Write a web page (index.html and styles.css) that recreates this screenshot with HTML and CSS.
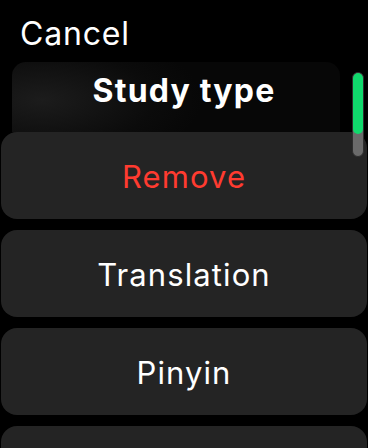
FILE: index.html
```html
<!DOCTYPE html>
<html>
<head>
	<meta charset="utf-8">
	<meta name="viewport" content="width=device-width, initial-scale=1">
	<title>Study type</title>
	<link rel="stylesheet" href="styles.css">
</head>
<body>
	<div class="top-bar">
		<span class="cancel">Cancel</span>
	</div>
	<div class="title-bar">
		<h1 class="title">Study type</h1>
	</div>
	<div class="options">
		<div class="option remove">Remove</div>
		<div class="option">Translation</div>
		<div class="option">Pinyin</div>
		<div class="option"></div>
	</div>
	<div class="scroll-track">
		<div class="scroll-thumb"></div>
	</div>
</body>
</html>
```

FILE: styles.css
```css
* {
	margin: 0px;
	padding: 0px;
	box-sizing: border-box;
}

html, body {
	height: 100%;
	overflow: hidden;
}

body {
	background-color: black;
	color: white;
	font-family: Inter, 'Noto Sans', sans-serif;
}

.top-bar {
	height: 62px;
	padding: 14px 0 0 20px;
}

.cancel {
	font-size: 32px;
	line-height: 40px;
	letter-spacing: 0.8px;
}

.title-bar {
	height: 70px;
	margin: 0 28px 0 12px;
	display: flex;
	justify-content: center;
	align-items: center;
	border-radius: 14px 14px 0 0;
	background: radial-gradient(ellipse 160px 70px at 30px 38px, #1c1c1c, #0b0b0b 70%, #070707);
}

.title {
	font-size: 32px;
	font-weight: 700;
	line-height: 40px;
	margin: 0 0 12px 16px;
	letter-spacing: 1.2px;
}

.options {
	display: flex;
	flex-direction: column;
	gap: 11px;
	padding: 0 1px;
}

.option {
	height: 87px;
	flex-shrink: 0;
	border-radius: 16px;
	background-color: #242424;
	display: flex;
	justify-content: center;
	align-items: center;
	font-size: 31px;
	letter-spacing: 1.1px;
	padding-top: 2px;
}

.remove {
	color: #ff3b30;
}

.scroll-track {
	position: absolute;
	top: 72px;
	left: 352px;
	width: 12px;
	height: 85px;
	border-radius: 6px;
	background-color: #6a6a6a;
	border: 1px solid #2e2e2e;
	overflow: hidden;
}

.scroll-thumb {
	height: 61px;
	border-radius: 5px;
	background-color: #10d96c;
}
```
